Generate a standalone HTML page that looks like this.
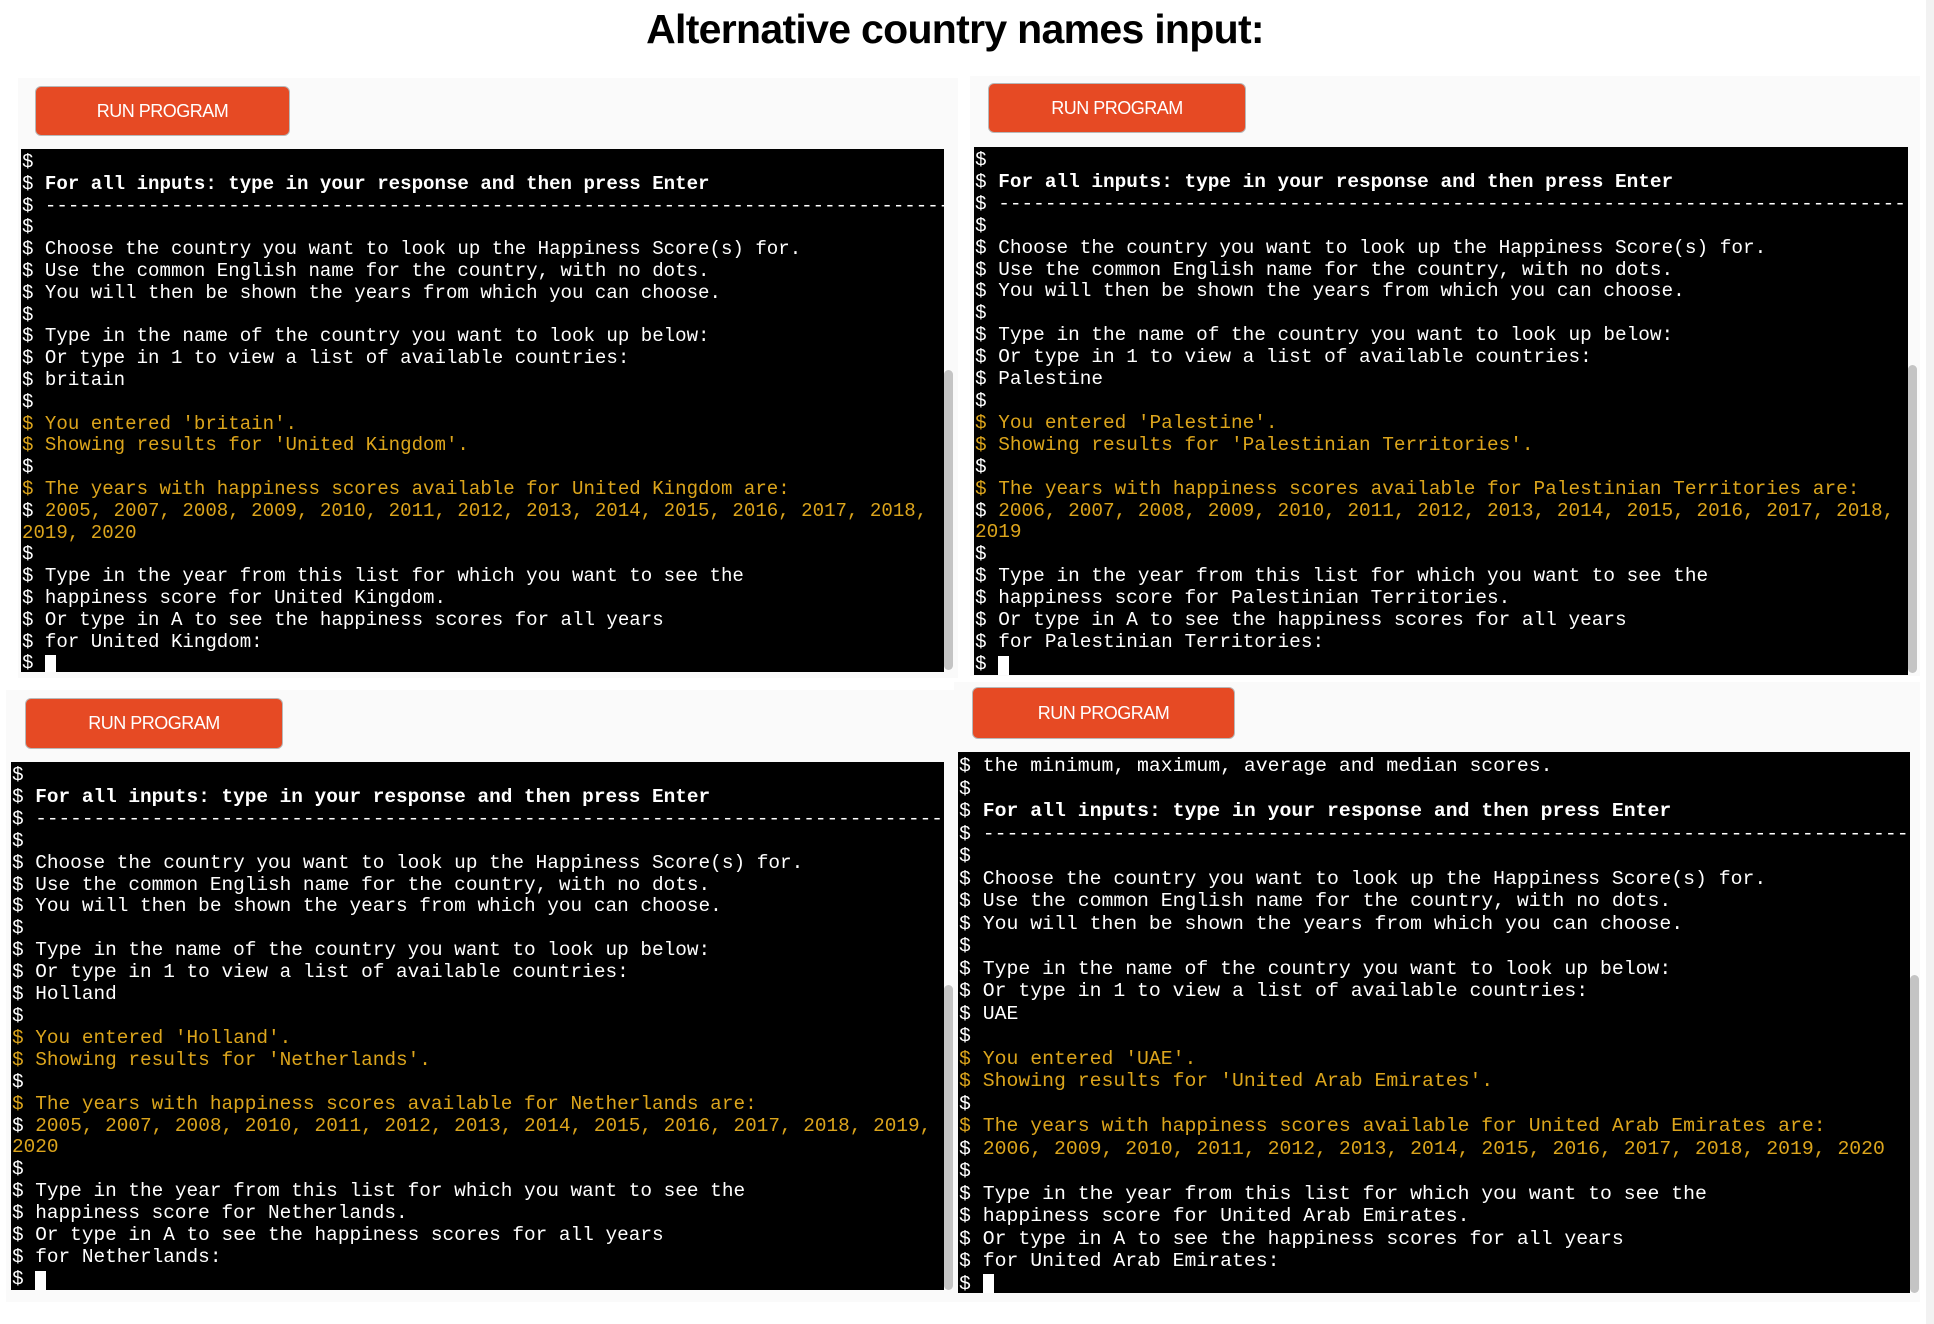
<!DOCTYPE html>
<html><head><meta charset="utf-8">
<style>
html,body{margin:0;padding:0;background:#fff;width:1934px;height:1324px;overflow:hidden;position:relative;font-family:"Liberation Sans",Arial,sans-serif}
h1{position:absolute;left:0;width:1910px;top:6px;margin:0;text-align:center;font-size:41px;font-weight:bold;letter-spacing:-0.7px;color:#000}
.bg{position:absolute;background:#fafafa}
.btn{position:absolute;background:#e64a24;border:1px solid #b8b8b8;border-radius:6px;color:#fff;font-size:18px;letter-spacing:-0.5px;text-align:center;box-sizing:border-box}
.term{position:absolute;background:#000;overflow:hidden}
.term pre{margin:0;padding:3px 0 0 1px;font-family:"Liberation Mono","DejaVu Sans Mono",monospace;color:#fff;white-space:pre}
.y{color:#dca51c}
b{font-weight:bold}
.cur{display:inline-block;background:#fff;width:11px;vertical-align:bottom}
.sb{position:absolute;background:#c4c4c4;border-radius:6px;width:9px}
</style></head><body>
<h1>Alternative country names input:</h1>

<div class="bg" style="left:18px;top:78px;width:940px;height:600px"></div>
<div class="bg" style="left:970px;top:76px;width:950px;height:600px"></div>
<div class="bg" style="left:6px;top:690px;width:950px;height:612px"></div>
<div class="bg" style="left:954px;top:682px;width:966px;height:620px"></div>
<div style="position:absolute;left:1926px;top:0;width:8px;height:1324px;background:#f2f2f2"></div>

<div class="btn" style="left:35px;top:86px;width:255px;height:50px;line-height:48px">RUN PROGRAM</div>
<div class="btn" style="left:988px;top:83px;width:258px;height:50px;line-height:48px">RUN PROGRAM</div>
<div class="btn" style="left:25px;top:698px;width:258px;height:51px;line-height:49px">RUN PROGRAM</div>
<div class="btn" style="left:972px;top:687px;width:263px;height:52px;line-height:50px">RUN PROGRAM</div>

<div class="sb" style="left:944px;top:370px;height:300px"></div>
<div class="sb" style="left:1908px;top:365px;height:308px"></div>
<div class="sb" style="left:944px;top:985px;height:305px"></div>
<div class="sb" style="left:1910px;top:975px;height:318px"></div>

<div class="term" style="left:21px;top:149px;width:923px;height:523px">
<pre style="font-size:19.1px;line-height:21.8px">$
$ <b>For all inputs: type in your response and then press Enter</b>
$ ------------------------------------------------------------------------------------------
$
$ Choose the country you want to look up the Happiness Score(s) for.
$ Use the common English name for the country, with no dots.
$ You will then be shown the years from which you can choose.
$
$ Type in the name of the country you want to look up below:
$ Or type in 1 to view a list of available countries:
$ britain
$
<span class="y">$ You entered 'britain'.
$ Showing results for 'United Kingdom'.</span>
$
<span class="y">$ The years with happiness scores available for United Kingdom are:</span>
$ <span class="y">2005, 2007, 2008, 2009, 2010, 2011, 2012, 2013, 2014, 2015, 2016, 2017, 2018,
2019, 2020</span>
$
$ Type in the year from this list for which you want to see the
$ happiness score for United Kingdom.
$ Or type in A to see the happiness scores for all years
$ for United Kingdom:
$ <span class="cur" style="height:20px"> </span></pre></div>

<div class="term" style="left:974px;top:147px;width:934px;height:528px">
<pre style="font-size:19.4px;line-height:21.9px">$
$ <b>For all inputs: type in your response and then press Enter</b>
$ ------------------------------------------------------------------------------------------
$
$ Choose the country you want to look up the Happiness Score(s) for.
$ Use the common English name for the country, with no dots.
$ You will then be shown the years from which you can choose.
$
$ Type in the name of the country you want to look up below:
$ Or type in 1 to view a list of available countries:
$ Palestine
$
<span class="y">$ You entered 'Palestine'.
$ Showing results for 'Palestinian Territories'.</span>
$
<span class="y">$ The years with happiness scores available for Palestinian Territories are:</span>
$ <span class="y">2006, 2007, 2008, 2009, 2010, 2011, 2012, 2013, 2014, 2015, 2016, 2017, 2018,
2019</span>
$
$ Type in the year from this list for which you want to see the
$ happiness score for Palestinian Territories.
$ Or type in A to see the happiness scores for all years
$ for Palestinian Territories:
$ <span class="cur" style="height:20px"> </span></pre></div>

<div class="term" style="left:11px;top:762px;width:933px;height:528px">
<pre style="font-size:19.4px;line-height:21.9px">$
$ <b>For all inputs: type in your response and then press Enter</b>
$ ------------------------------------------------------------------------------------------
$
$ Choose the country you want to look up the Happiness Score(s) for.
$ Use the common English name for the country, with no dots.
$ You will then be shown the years from which you can choose.
$
$ Type in the name of the country you want to look up below:
$ Or type in 1 to view a list of available countries:
$ Holland
$
<span class="y">$ You entered 'Holland'.
$ Showing results for 'Netherlands'.</span>
$
<span class="y">$ The years with happiness scores available for Netherlands are:</span>
$ <span class="y">2005, 2007, 2008, 2010, 2011, 2012, 2013, 2014, 2015, 2016, 2017, 2018, 2019,
2020</span>
$
$ Type in the year from this list for which you want to see the
$ happiness score for Netherlands.
$ Or type in A to see the happiness scores for all years
$ for Netherlands:
$ <span class="cur" style="height:20px"> </span></pre></div>

<div class="term" style="left:958px;top:752px;width:952px;height:541px">
<pre style="font-size:19.8px;line-height:22.5px">$ the minimum, maximum, average and median scores.
$
$ <b>For all inputs: type in your response and then press Enter</b>
$ ------------------------------------------------------------------------------------------
$
$ Choose the country you want to look up the Happiness Score(s) for.
$ Use the common English name for the country, with no dots.
$ You will then be shown the years from which you can choose.
$
$ Type in the name of the country you want to look up below:
$ Or type in 1 to view a list of available countries:
$ UAE
$
<span class="y">$ You entered 'UAE'.
$ Showing results for 'United Arab Emirates'.</span>
$
<span class="y">$ The years with happiness scores available for United Arab Emirates are:</span>
$ <span class="y">2006, 2009, 2010, 2011, 2012, 2013, 2014, 2015, 2016, 2017, 2018, 2019, 2020</span>
$
$ Type in the year from this list for which you want to see the
$ happiness score for United Arab Emirates.
$ Or type in A to see the happiness scores for all years
$ for United Arab Emirates:
$ <span class="cur" style="height:21px"> </span></pre></div>
</body></html>
